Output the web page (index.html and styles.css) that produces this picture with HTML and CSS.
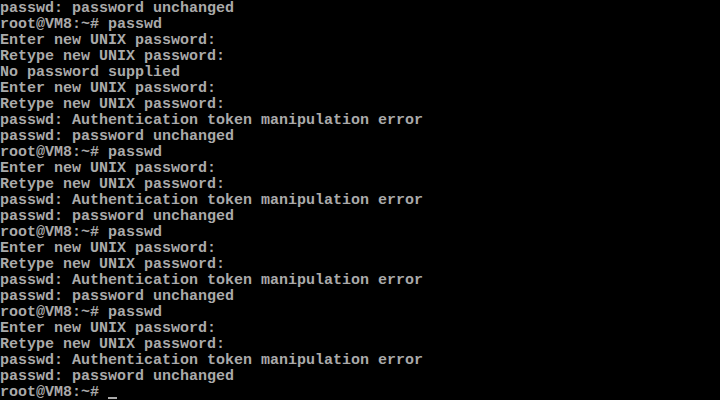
FILE: index.html
```html
<!DOCTYPE html>
<html>
<head>
<meta charset="utf-8">
<link rel="stylesheet" href="styles.css">
</head>
<body>
<pre class="console">passwd: password unchanged
root@VM8:~# passwd
Enter new UNIX password:
Retype new UNIX password:
No password supplied
Enter new UNIX password:
Retype new UNIX password:
passwd: Authentication token manipulation error
passwd: password unchanged
root@VM8:~# passwd
Enter new UNIX password:
Retype new UNIX password:
passwd: Authentication token manipulation error
passwd: password unchanged
root@VM8:~# passwd
Enter new UNIX password:
Retype new UNIX password:
passwd: Authentication token manipulation error
passwd: password unchanged
root@VM8:~# passwd
Enter new UNIX password:
Retype new UNIX password:
passwd: Authentication token manipulation error
passwd: password unchanged
root@VM8:~# <span class="cursor"></span></pre>
</body>
</html>
```
FILE: styles.css
```css
html, body {
  margin: 0;
  padding: 0;
  background: #000;
  width: 720px;
  height: 400px;
  overflow: hidden;
}
.console {
  margin: 0;
  padding: 1px 0 0 0;
  font-family: "Liberation Mono", "DejaVu Sans Mono", monospace;
  font-size: 15px;
  line-height: 16px;
  color: #aaaaaa;
  font-weight: bold;
  white-space: pre;
}
.cursor {
  display: inline-block;
  width: 9px;
  height: 2px;
  background: #aaaaaa;
  vertical-align: -3px;
}
```
